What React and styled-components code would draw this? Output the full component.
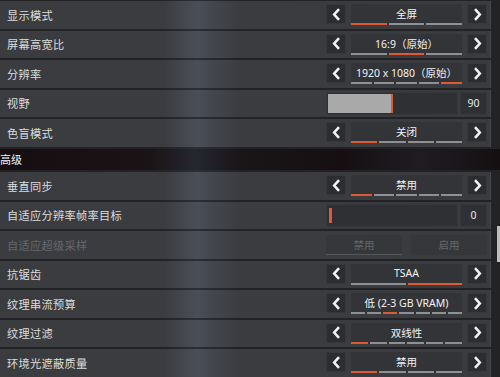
import styled, { createGlobalStyle } from 'styled-components';

const ORANGE = '#de5a30';

const ROWS = [
  { label: '显示模式', type: 'select', value: '全屏', count: 3, active: 0 },
  { label: '屏幕高宽比', type: 'select', value: '16:9（原始）', count: 3, active: 1 },
  { label: '分辨率', type: 'select', value: '1920 x 1080（原始）', count: 5, active: 4 },
  { label: '视野', type: 'slider', value: '90', fill: 63 },
  { label: '色盲模式', type: 'select', value: '关闭', count: 4, active: 0 },
];

const ADVANCED = [
  { label: '垂直同步', type: 'select', value: '禁用', count: 5, active: 0 },
  { label: '自适应分辨率帧率目标', type: 'slider', value: '0', fill: 0 },
  { label: '自适应超级采样', type: 'toggle', disabled: true },
  { label: '抗锯齿', type: 'select', value: 'TSAA', count: 2, active: 1 },
  { label: '纹理串流预算', type: 'select', value: '低 (2-3 GB VRAM)', count: 7, active: 2 },
  { label: '纹理过滤', type: 'select', value: '双线性', count: 6, active: 0 },
  { label: '环境光遮蔽质量', type: 'select', value: '禁用', count: 4, active: 0 },
];

const Chevron = ({ dir }) => (
  <svg width="9" height="13" viewBox="0 0 9 13">
    <polyline
      points={dir === 'left' ? '7,1.2 2.2,6.5 7,11.8' : '2,1.2 6.8,6.5 2,11.8'}
      fill="none"
      stroke="#f2f2f2"
      strokeWidth="2.6"
    />
  </svg>
);

const Select = ({ value, count, active }) => (
  <Control>
    <Arrow>
      <Chevron dir="left" />
    </Arrow>
    <Center>
      <Value>{value}</Value>
      <Bars>
        {Array.from({ length: count }).map((_, i) => (
          <Bar key={i} on={i === active} />
        ))}
      </Bars>
    </Center>
    <Arrow>
      <Chevron dir="right" />
    </Arrow>
  </Control>
);

const Slider = ({ value, fill }) => (
  <SliderWrap>
    <Track>{fill > 0 ? <Fill style={{ width: fill }} /> : <Knob />}</Track>
    <Number>{value}</Number>
  </SliderWrap>
);

const Toggle = () => (
  <ToggleWrap>
    <ToggleBtn underline>禁用</ToggleBtn>
    <ToggleBtn>启用</ToggleBtn>
  </ToggleWrap>
);

const renderRow = row => (
  <Row key={row.label}>
    <Label disabled={row.disabled}>{row.label}</Label>
    {row.type === 'select' && <Select {...row} />}
    {row.type === 'slider' && <Slider {...row} />}
    {row.type === 'toggle' && <Toggle />}
  </Row>
);

const App = () => (
  <>
    <GlobalStyle />
    <Page>
      <List>
        {ROWS.map(renderRow)}
        <Section>高级</Section>
        {ADVANCED.map(renderRow)}
      </List>
      <Scroll />
    </Page>
  </>
);

export default App;

const GlobalStyle = createGlobalStyle`
  html, body {
    margin: 0;
    padding: 0;
    background: #242427;
    overflow: hidden;
  }
  body {
    font-family: "Noto Sans", "Noto Sans CJK SC", sans-serif;
  }
`;

const Page = styled.div`
  position: relative;
  width: 500px;
  height: 377px;
  overflow: hidden;
  background: linear-gradient(90deg, #222225 0, #222225 160px, #2c2e34 195px, #222225 240px, #232326 500px);
`;

const List = styled.div`
  display: flex;
  flex-direction: column;
  gap: 2px;
  padding-top: 1px;
`;

const Row = styled.div`
  width: 491px;
  height: 27.5px;
  box-sizing: border-box;
  display: flex;
  align-items: center;
  justify-content: space-between;
  padding: 0 3px 0 7px;
  background: linear-gradient(
    90deg,
    #3b3c40 0,
    #3b3c40 165px,
    #454850 185px,
    #4a4e58 198px,
    #42454c 215px,
    #3b3c40 240px,
    #3a3b3f 491px
  );
  border-right: 1px solid #46474b;
`;

const Label = styled.div`
  font-size: 11.2px;
  letter-spacing: 0.3px;
  color: ${p => (p.disabled ? '#66676b' : '#dcdcdc')};
`;

const Section = styled.div`
  height: 21.5px;
  display: flex;
  align-items: center;
  font-size: 11px;
  color: #f4f4f4;
  background: linear-gradient(
    90deg,
    #140e10 0,
    #1a1416 150px,
    #252730 195px,
    #1a1517 240px,
    #150f11 340px,
    #1f1c22 420px,
    #150f11 500px
  );
`;

const Control = styled.div`
  display: flex;
  align-items: center;
  gap: 5px;
  height: 21px;
`;

const Arrow = styled.div`
  width: 20px;
  height: 20px;
  box-sizing: border-box;
  display: flex;
  align-items: center;
  justify-content: center;
  background: #2c2d30;
  border: 1px solid #37383c;
  margin-top: -1px;
`;

const Center = styled.div`
  width: 111px;
  height: 21px;
  display: flex;
  flex-direction: column;
  background: #333438;
`;

const Value = styled.div`
  flex: 1;
  display: flex;
  align-items: center;
  justify-content: center;
  font-size: 10.5px;
  color: #f2f2f2;
  white-space: nowrap;
`;

const Bars = styled.div`
  display: flex;
  gap: 2px;
  height: 2px;
`;

const Bar = styled.div`
  flex: 1;
  background: ${p => (p.on ? ORANGE : '#8f9094')};
`;

const SliderWrap = styled.div`
  display: flex;
  gap: 2px;
  height: 23px;
`;

const Track = styled.div`
  width: 132px;
  box-sizing: border-box;
  padding: 1px;
  display: flex;
  background: #2f3034;
  border: 1px solid #37383c;
`;

const Fill = styled.div`
  background: #a9a9a9;
  border-right: 2px solid ${ORANGE};
`;

const Knob = styled.div`
  width: 3px;
  margin: 2px 0 2px 1px;
  background: ${ORANGE};
`;

const Number = styled.div`
  width: 27px;
  box-sizing: border-box;
  display: flex;
  align-items: center;
  justify-content: center;
  font-size: 10.5px;
  color: #e6e6e6;
  background: #2f3034;
  border: 1px solid #37383c;
`;

const ToggleWrap = styled.div`
  display: flex;
  gap: 9px;
`;

const ToggleBtn = styled.div`
  width: 76px;
  height: 20px;
  box-sizing: border-box;
  display: flex;
  align-items: center;
  justify-content: center;
  font-size: 10.5px;
  color: #66676b;
  background: #36373a;
  border-bottom: 1px solid ${p => (p.underline ? '#55565a' : '#36373a')};
`;

const Scroll = styled.div`
  position: absolute;
  right: 0;
  top: 226px;
  width: 3px;
  height: 36px;
  background: #bdbdbd;
`;
